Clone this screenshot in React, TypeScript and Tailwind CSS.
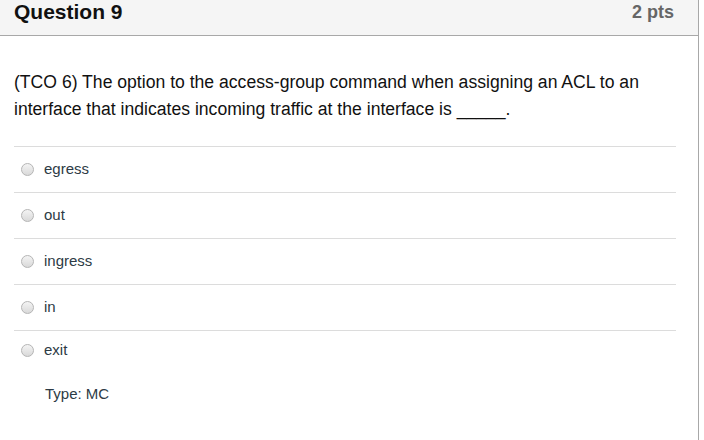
import React from 'react';

const options = ['egress', 'out', 'ingress', 'in', 'exit'];

function Radio() {
  return (
    <span className="inline-block h-[13px] w-[13px] shrink-0 rounded-full border border-[#b5b5b5] bg-gradient-to-b from-[#f4f4f4] to-[#d9d9d9]" />
  );
}

export default function App() {
  return (
    <div className="h-[440px] w-[704px] bg-white font-['Liberation_Sans',Arial,sans-serif]">
      <div className="flex h-[440px] w-[699px] flex-col border-r border-[#a8a8a8]">
        <div className="flex h-[36px] shrink-0 items-start justify-between border-b border-[#a8a8a8] bg-[#f5f5f5] pl-[14px] pr-[24px] pt-[1px]">
          <h2 className="text-[21px] font-bold leading-none text-[#111]">Question 9</h2>
          <span className="mt-[2px] text-[18px] font-bold leading-none text-[#666]">2 pts</span>
        </div>

        <div className="pl-[14px] pr-[22px] pt-[33px]">
          <p className="text-[17.6px] leading-[27px] text-[#111]">
            (TCO 6) The option to the access-group command when assigning an ACL to an interface that
            indicates incoming traffic at the interface is _____.
          </p>

          <div className="mt-[23px]">
            {options.map((opt, i) => (
              <div
                key={opt}
                className={
                  'flex items-center gap-[10px] border-t border-[#dcdcdc] pl-[7px] ' +
                  (i === options.length - 1 ? 'h-[40px]' : 'h-[46px]')
                }
              >
                <Radio />
                <span className="text-[15px] text-[#2d3b45]">{opt}</span>
              </div>
            ))}
          </div>

          <div className="mt-[13px] pl-[31px] text-[15px] text-[#2d3b45]">Type: MC</div>
        </div>
      </div>
    </div>
  );
}
